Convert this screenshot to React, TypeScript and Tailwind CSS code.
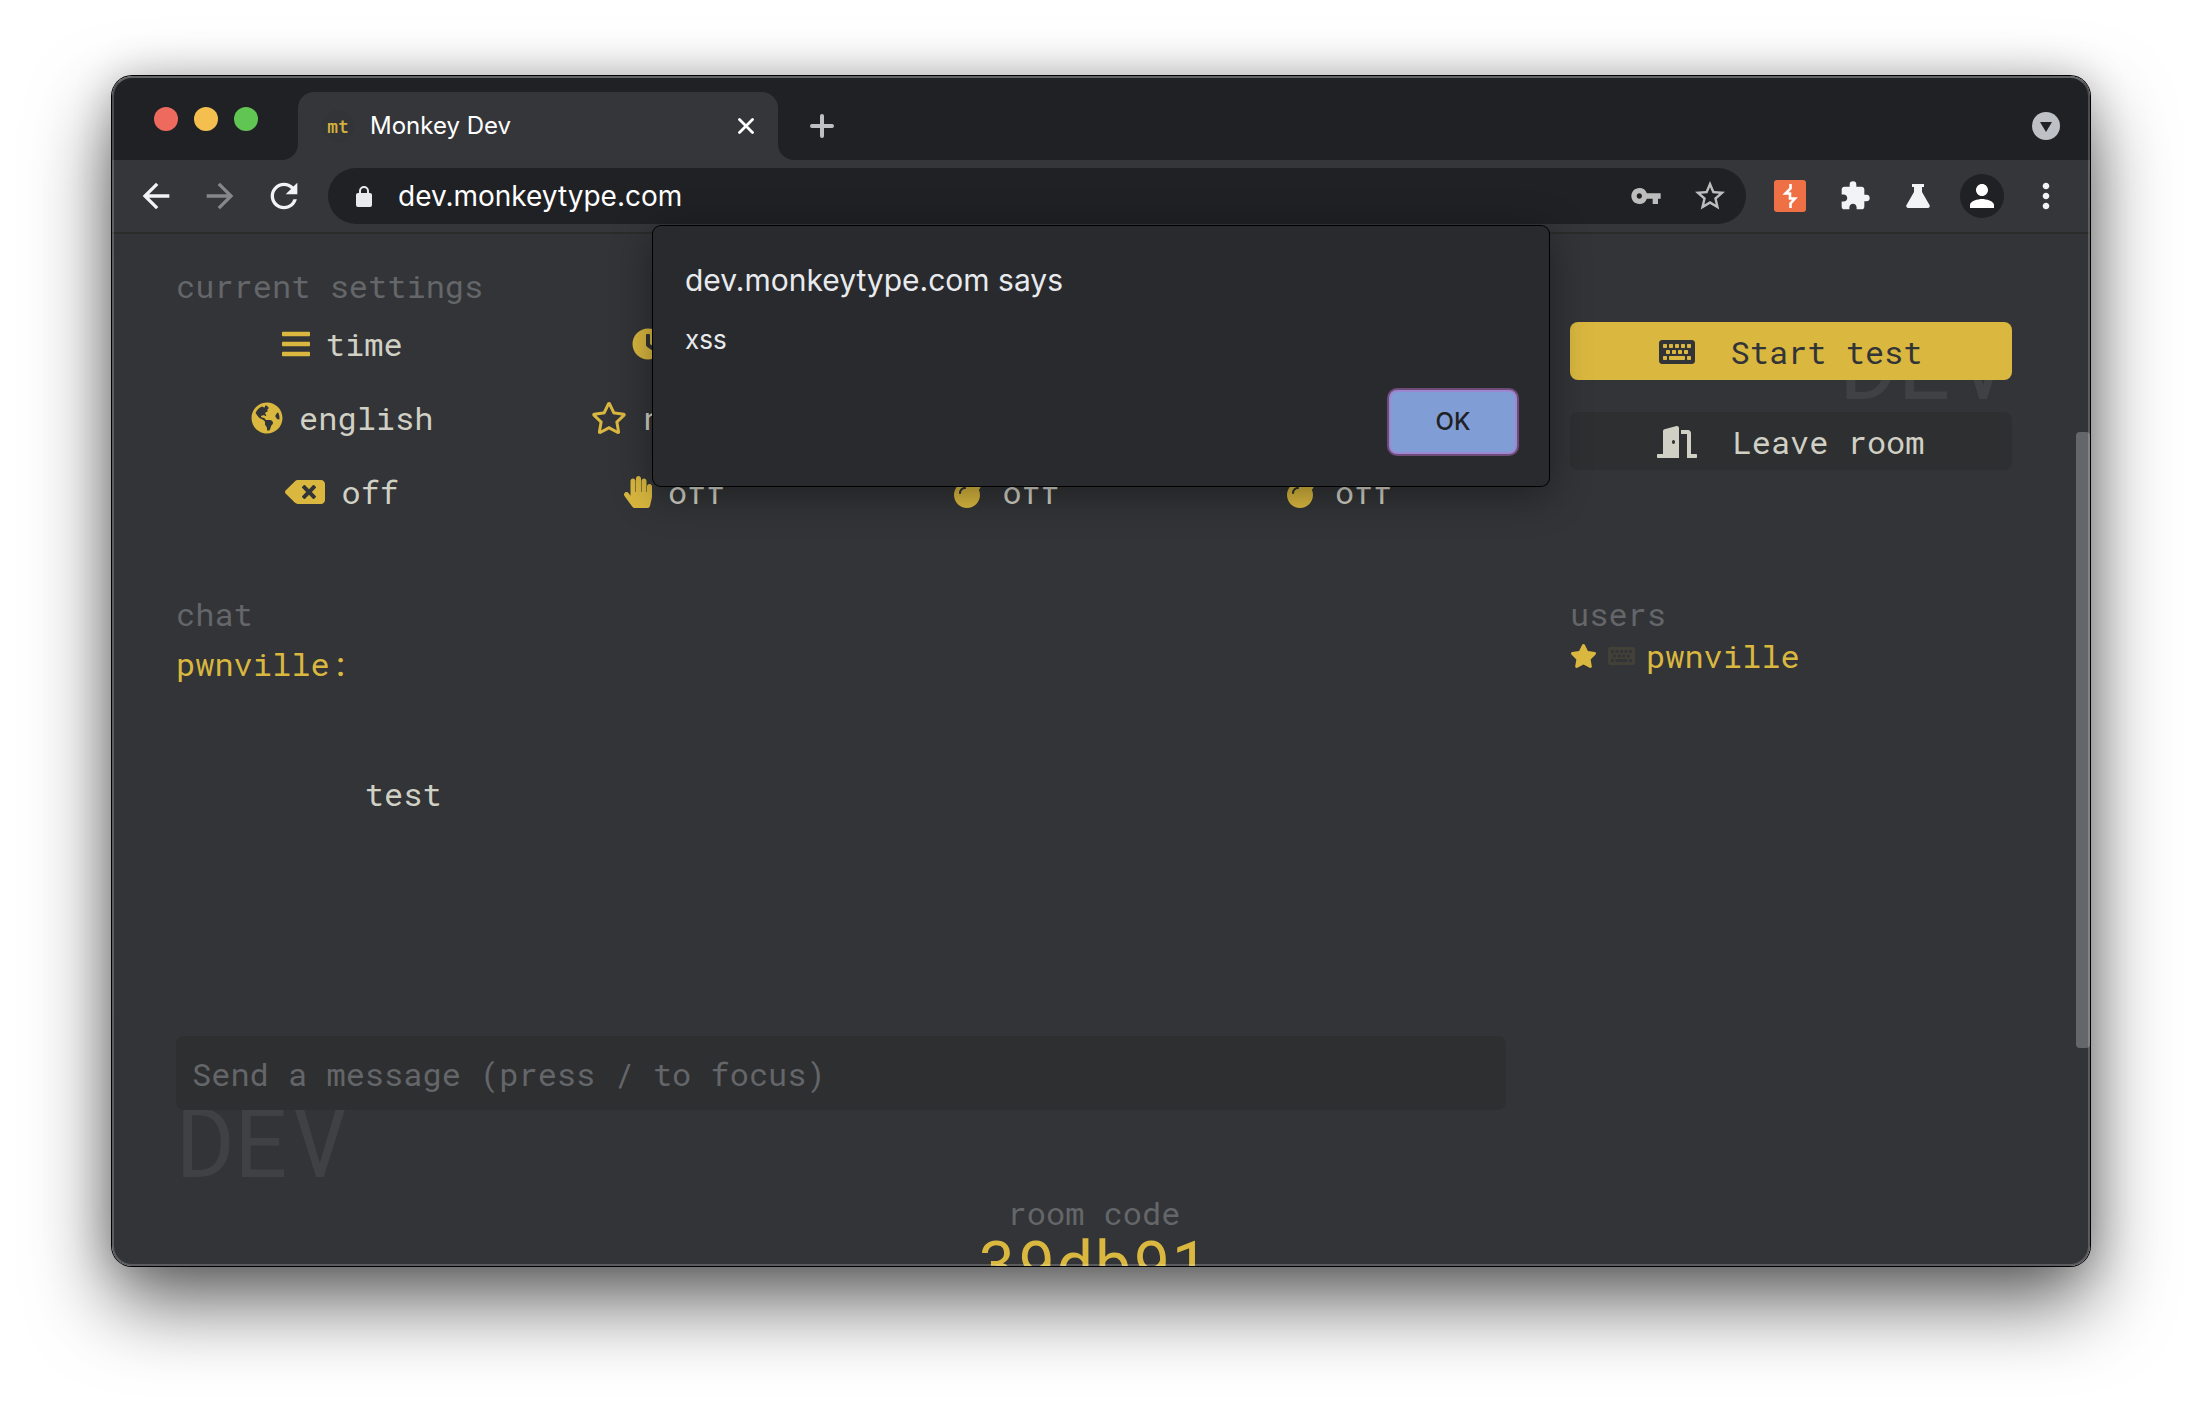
import React from "react";
import {
  FaBars,
  FaClock,
  FaGlobeAmericas,
  FaRegStar,
  FaBackspace,
  FaHandPaper,
  FaBomb,
  FaKeyboard,
  FaDoorOpen,
  FaStar,
} from "react-icons/fa";
import {
  MdArrowBack,
  MdArrowForward,
  MdRefresh,
  MdVpnKey,
  MdStarBorder,
  MdExtension,
  MdPerson,
  MdMoreVert,
} from "react-icons/md";

type SettingProps = { icon: React.ReactNode; label: string; place: string };

function Setting({ icon, label, place }: SettingProps) {
  return (
    <li className={`flex h-[74px] items-center justify-center gap-4 text-[#d1d0c5] ${place}`}>
      <span className="text-[#dab83f]">{icon}</span>
      <span>{label}</span>
    </li>
  );
}

function TabStrip() {
  return (
    <div className="flex h-[84px] items-end bg-[#202124]">
      <div className="flex h-[84px] w-[186px] shrink-0 items-center gap-4 pt-[2px] pl-[42px]">
        <button aria-label="Close window" className="size-6 rounded-full bg-[#ee6a5f]" />
        <button aria-label="Minimize window" className="size-6 rounded-full bg-[#f5bf4f]" />
        <button aria-label="Zoom window" className="size-6 rounded-full bg-[#61c554]" />
      </div>
      <div className="relative flex h-[68px] w-[480px] shrink-0 items-center rounded-t-2xl bg-[#35363a] px-6 text-white">
        <svg className="absolute bottom-0 -left-4 size-4 text-[#35363a]" viewBox="0 0 16 16" fill="currentColor">
          <path d="M16 0v16H0A16 16 0 0 0 16 0z" />
        </svg>
        <svg className="absolute -right-4 bottom-0 size-4 text-[#35363a]" viewBox="0 0 16 16" fill="currentColor">
          <path d="M0 0v16h16A16 16 0 0 1 0 0z" />
        </svg>
        <span className="flex size-8 items-center justify-center rounded-full bg-[#323437] font-['Roboto_Mono','Liberation_Mono',monospace] text-[18px] font-medium text-[#d4b13d]">
          mt
        </span>
        <span className="ml-4 flex-1 text-[24px] leading-8">Monkey Dev</span>
        <button aria-label="Close tab">
          <svg className="size-4" viewBox="0 0 16 16" fill="none" stroke="currentColor" strokeWidth="2.800" strokeLinecap="round">
            <path d="M1.500 1.500l13 13M14.500 1.500l-13 13" />
          </svg>
        </button>
      </div>
      <button aria-label="New tab" className="ml-8 flex h-[68px] items-center text-[#bdc1c6]">
        <svg className="size-6" viewBox="0 0 24 24" fill="none" stroke="currentColor" strokeWidth="4" strokeLinecap="round">
          <path d="M12 2v20M2 12h20" />
        </svg>
      </button>
      <button aria-label="Search tabs" className="mr-[30px] ml-auto flex h-[68px] items-center">
        <svg className="size-7" viewBox="0 0 28 28">
          <circle cx="14" cy="14" r="14" fill="#bdc1c6" />
          <path d="M8 10h12l-6 10z" fill="#202124" />
        </svg>
      </button>
    </div>
  );
}

function Toolbar() {
  return (
    <div className="flex h-[74px] items-center border-b-2 border-[#2b2b2a] bg-[#35363a] text-[#f1f3f4]">
      <div className="flex w-[216px] shrink-0 items-center gap-6 pl-6">
        <button aria-label="Back">
          <MdArrowBack className="size-10" />
        </button>
        <button aria-label="Forward" className="text-[#86878a]">
          <MdArrowForward className="size-10" />
        </button>
        <button aria-label="Reload">
          <MdRefresh className="size-10" />
        </button>
      </div>
      <div className="flex h-14 flex-1 items-center rounded-full bg-[#202124] pr-[18px] pl-7">
        <svg className="h-[21px] w-4 text-[#e8eaed]" viewBox="0 0 16 21">
          <path d="M4 9V5a4 4 0 0 1 8 0v4" fill="none" stroke="currentColor" strokeWidth="2" />
          <rect y="7" width="16" height="14" rx="2" fill="currentColor" />
        </svg>
        <input
          aria-label="Address"
          defaultValue="dev.monkeytype.com"
          className="ml-[26px] h-10 min-w-0 flex-1 bg-transparent text-[28px] text-white outline-none"
        />
        <button aria-label="Passwords" className="text-[#bdbdbd]">
          <MdVpnKey className="size-8" />
        </button>
        <button aria-label="Bookmark" className="ml-[30px] text-[#bdbdbd]">
          <MdStarBorder className="size-9" />
        </button>
      </div>
      <div className="flex shrink-0 items-center pr-6 pl-7">
        <button aria-label="Proxy extension">
          <svg className="size-8" viewBox="0 0 32 32">
            <rect width="32" height="32" rx="3" fill="#ee7044" />
            <path
              d="M16.500 4v4.500L11.500 13.500H16V18.500H21L16.500 23.500V28"
              fill="none"
              stroke="#fff"
              strokeWidth="2.600"
            />
          </svg>
        </button>
        <button aria-label="Extensions" className="ml-[33px]">
          <MdExtension className="size-8" />
        </button>
        <button aria-label="Experiments" className="ml-[35px]">
          <svg className="h-6 w-6" viewBox="0 0 24 24" fill="currentColor">
            <path d="M6 0h12v3h-2v5l7.500 13a2 2 0 0 1-1.700 3H2.200a2 2 0 0 1-1.700-3L8 8V3H6z" />
          </svg>
        </button>
        <button aria-label="Profile" className="ml-[30px] flex size-11 items-center justify-center rounded-full bg-[#202124] text-white">
          <MdPerson className="size-9" />
        </button>
        <button aria-label="Menu" className="ml-[22px]">
          <MdMoreVert className="size-10" />
        </button>
      </div>
    </div>
  );
}

function AlertDialog() {
  return (
    <div
      role="dialog"
      aria-labelledby="alert-title"
      className="absolute top-[150px] left-1/2 z-20 flex h-[260px] w-[896px] -translate-x-1/2 flex-col rounded-lg bg-[#292a2d] p-8 text-[#e8eaed] shadow-[0_0_0_1px_#000,0_8px_40px_rgba(0,0,0,0.4)]"
    >
      <h2 id="alert-title" className="text-[30px] leading-[44px]">
        dev.monkeytype.com says
      </h2>
      <p className="mt-[22px] text-[26px] leading-8">xss</p>
      <button className="mt-auto h-16 w-32 self-end rounded-lg border-2 border-[#9c88d0] bg-[#819dd5] text-[24px] font-medium text-[#202124] shadow-[0_0_0_2px_#6d4c79]">
        OK
      </button>
    </div>
  );
}

function Watermark({ place }: { place: string }) {
  return (
    <span aria-hidden="true" className={`pointer-events-none absolute text-[96px] leading-[96px] text-[#404145] ${place}`}>
      DEV
    </span>
  );
}

function Page() {
  return (
    <main className="relative h-[1032px] overflow-hidden bg-[#323437] pr-[78px] pl-16 font-['Roboto_Mono','Liberation_Mono',monospace] text-[32px] leading-[42px] text-[#646669]">
      <Watermark place="top-[80px] right-[78px]" />
      <Watermark place="top-[858px] left-16" />
      <div className="relative flex gap-16">
        <section className="flex min-w-0 flex-1 flex-col">
          <h2 className="mt-[31px]">current settings</h2>
          <ul className="grid grid-cols-4">
            <Setting icon={<FaBars className="h-8 w-7" />} label="time" place="col-start-1" />
            <Setting icon={<FaClock className="size-8" />} label="30" place="col-start-2" />
            <Setting icon={<FaGlobeAmericas className="size-8" />} label="english" place="col-start-1" />
            <Setting icon={<FaRegStar className="h-8 w-9" />} label="normal" place="col-start-2" />
            <Setting icon={<FaBackspace className="h-8 w-10" />} label="off" place="col-start-1" />
            <Setting icon={<FaHandPaper className="h-8 w-7" />} label="off" place="col-start-2" />
            <Setting icon={<FaBomb className="size-8" />} label="off" place="col-start-3" />
            <Setting icon={<FaBomb className="size-8" />} label="off" place="col-start-4" />
          </ul>
          <h2 className="mt-16">chat</h2>
          <div className="mt-2 flex h-[393px] gap-4">
            <span className="text-[#dab83f]">pwnville:</span>
            <span className="pt-[130px] text-[#d1d0c5]">test</span>
          </div>
          <input
            aria-label="Message"
            placeholder="Send a message (press / to focus)"
            className="h-[74px] w-full rounded-lg bg-[#2e2f31] px-4 text-[#d1d0c5] outline-none placeholder:text-[#646669]"
          />
        </section>
        <aside className="flex w-[442px] shrink-0 flex-col pt-[88px]">
          <button className="flex h-[58px] items-center justify-center gap-[35px] rounded-lg bg-[#dab83f] pt-[2px] text-[#323437]">
            <FaKeyboard className="h-8 w-9" />
            Start test
          </button>
          <button className="mt-8 flex h-[58px] items-center justify-center gap-[35px] rounded-lg bg-[#2e2f31] pt-[2px] text-[#d1d0c5]">
            <FaDoorOpen className="h-8 w-10" />
            Leave room
          </button>
          <h2 className="mt-[123px]">users</h2>
          <div className="flex items-center gap-[11px] text-[#dab83f]">
            <FaStar className="h-6 w-[27px]" />
            <FaKeyboard className="h-6 w-[27px] opacity-10" />
            <span>pwnville</span>
          </div>
        </aside>
      </div>
      <div className="relative mt-[82px] text-center">
        <h2>room code</h2>
        <p className="text-[64px] leading-[56px] text-[#dab83f]">39db91</p>
      </div>
      <div className="absolute top-[198px] right-0 h-[616px] w-[14px] rounded bg-[#646669]" />
    </main>
  );
}

export default function App() {
  return (
    <div className="min-h-screen bg-white px-28 pt-[76px] pb-[148px] font-[Inter,sans-serif]">
      <div className="relative overflow-visible rounded-[20px] shadow-[0_0_0_1px_#000,0_36px_80px_rgba(0,0,0,0.62),0_0_40px_rgba(0,0,0,0.2)]">
        <div className="overflow-hidden rounded-[20px]">
          <TabStrip />
          <Toolbar />
          <Page />
        </div>
        <AlertDialog />
        <div className="pointer-events-none absolute inset-0 z-30 rounded-[20px] border-2 border-white/20 border-t-white/30" />
      </div>
    </div>
  );
}
